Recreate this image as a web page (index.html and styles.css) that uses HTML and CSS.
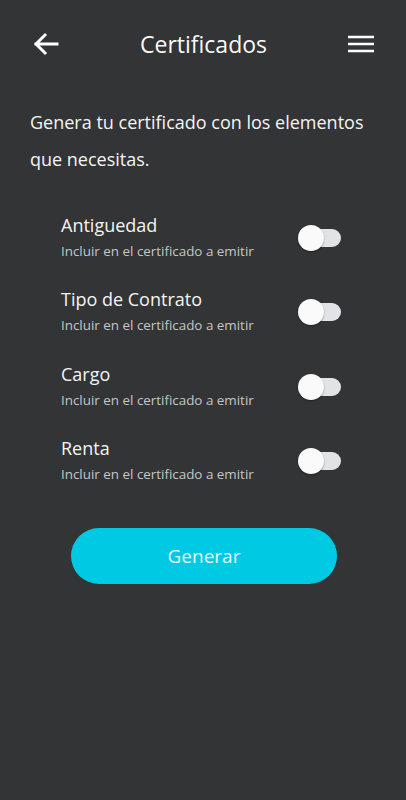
FILE: index.html
```html
<!DOCTYPE html>
<html lang="es">
<head>
  <meta charset="UTF-8">
  <meta name="viewport" content="width=device-width, initial-scale=1.0">
  <title>Certificados</title>
  <link rel="stylesheet" href="styles.css">
</head>
<body>
  <header class="topbar">
    <button class="icon-btn back-btn" aria-label="Volver">
      <svg width="26" height="24" viewBox="0 0 26 24">
        <path d="M24 12H3M12 3L3 12l9 9" fill="none" stroke="#fff" stroke-width="3" stroke-linecap="square" stroke-linejoin="miter"/>
      </svg>
    </button>
    <h1 class="title">Certificados</h1>
    <button class="icon-btn menu-btn" aria-label="Menú">
      <svg width="26" height="18" viewBox="0 0 26 18">
        <path d="M0 2h26M0 9h26M0 16h26" stroke="#fff" stroke-width="2.5"/>
      </svg>
    </button>
  </header>

  <p class="intro">Genera tu certificado con los elementos que necesitas.</p>

  <ul class="options">
    <li class="option">
      <div class="option-text">
        <span class="option-name">Antiguedad</span>
        <span class="option-desc">Incluir en el certificado a emitir</span>
      </div>
      <span class="switch"><span class="knob"></span></span>
    </li>
    <li class="option">
      <div class="option-text">
        <span class="option-name">Tipo de Contrato</span>
        <span class="option-desc">Incluir en el certificado a emitir</span>
      </div>
      <span class="switch"><span class="knob"></span></span>
    </li>
    <li class="option">
      <div class="option-text">
        <span class="option-name">Cargo</span>
        <span class="option-desc">Incluir en el certificado a emitir</span>
      </div>
      <span class="switch"><span class="knob"></span></span>
    </li>
    <li class="option">
      <div class="option-text">
        <span class="option-name">Renta</span>
        <span class="option-desc">Incluir en el certificado a emitir</span>
      </div>
      <span class="switch"><span class="knob"></span></span>
    </li>
  </ul>

  <div class="actions">
    <button class="generate-btn">Generar</button>
  </div>
</body>
</html>
```

FILE: styles.css
```css
body {
  margin: 0;
  min-height: 800px;
  background-color: #323436;
  color: #f4f4f4;
  font-family: "Open Sans", "Noto Sans", sans-serif;
}
.topbar {
  display: flex;
  align-items: center;
  justify-content: space-between;
  height: 44px;
  padding: 22px 32px 0 33px;
}
.icon-btn {
  display: flex;
  align-items: center;
  justify-content: center;
  width: 26px;
  padding: 0;
  border: none;
  background: none;
  cursor: pointer;
}
.title {
  margin: 0;
  font-size: 23px;
  font-weight: 400;
  color: #fafafa;
}
.intro {
  margin: 38px 30px 0;
  font-size: 18px;
  line-height: 37px;
  color: #f4f4f4;
}
.options {
  list-style: none;
  margin: 22px 0 0;
  padding: 0 65px 0 61px;
}
.option {
  display: flex;
  align-items: center;
  justify-content: space-between;
  height: 74.5px;
}
.option-text {
  display: flex;
  flex-direction: column;
  gap: 3px;
}
.option-name {
  font-size: 18px;
  line-height: 24px;
  color: #f4f4f4;
}
.option-desc {
  font-size: 13.4px;
  line-height: 22px;
  color: #c4c6c8;
}
.switch {
  position: relative;
  width: 36px;
  height: 18px;
  border-radius: 9px;
  background-color: #e1e3e6;
  margin-top: 1px;
}
.knob {
  position: absolute;
  left: -7px;
  top: -4px;
  width: 26px;
  height: 26px;
  border-radius: 50%;
  background-color: #fafafa;
  box-shadow: 0 1px 2px rgba(0, 0, 0, 0.35);
}
.actions {
  display: flex;
  justify-content: center;
  margin-top: 30px;
  padding-left: 2px;
}
.generate-btn {
  width: 266px;
  height: 56px;
  border: none;
  border-radius: 28px;
  background-color: #00c9e4;
  color: #e9fbfd;
  font-family: inherit;
  font-size: 19px;
  cursor: pointer;
}
```
